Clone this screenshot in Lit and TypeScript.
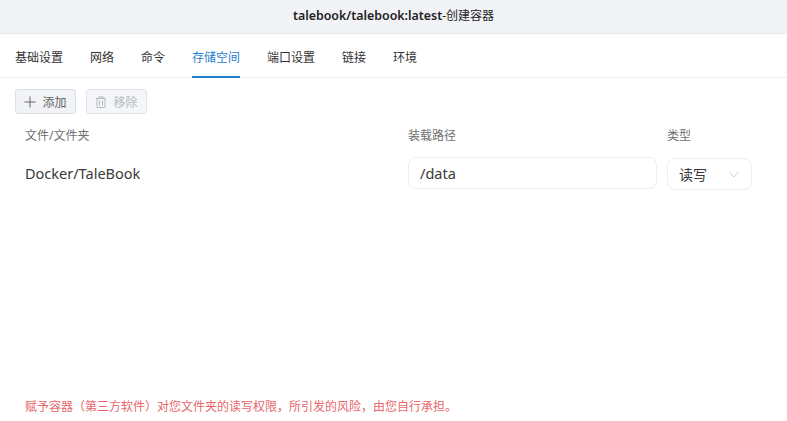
import { LitElement, html, css } from "lit";
import { customElement } from "lit/decorators.js";

@customElement("app-root")
export class AppRoot extends LitElement {
  static styles = css`
    :host {
      display: flex;
      flex-direction: column;
      width: 787px;
      height: 421px;
      background: #fff;
      overflow: hidden;
      font-family: "Noto Sans", "Noto Sans CJK SC", sans-serif;
      color: #333;
    }
    .title {
      height: 34px;
      box-sizing: border-box;
      flex: none;
      padding-bottom: 4px;
      background: #f1f3f7;
      border-bottom: 1px solid #e8e9ec;
      display: flex;
      align-items: center;
      justify-content: center;
      font-size: 12px;
      color: #222;
    }
    .title b { font-weight: 600; font-size: 12.4px; }
    .tabs {
      height: 44px;
      box-sizing: border-box;
      flex: none;
      display: flex;
      gap: 27px;
      padding-left: 15px;
      border-bottom: 1px solid #eeeff1;
      font-size: 12px;
    }
    .tab {
      display: flex;
      align-items: center;
      height: 44px;
      box-sizing: border-box;
      padding-top: 4px;
      border-bottom: 2px solid transparent;
    }
    .tab.on { color: #1f7ccb; border-bottom-color: #1f7ccb; }
    .tools { display: flex; gap: 10px; padding: 11px 0 0 15px; }
    .btn {
      width: 61px;
      height: 25px;
      box-sizing: border-box;
      border: 1px solid #dcdfe4;
      border-radius: 3px;
      background: #f1f3f6;
      display: flex;
      align-items: center;
      justify-content: center;
      gap: 6px;
      font-size: 12px;
      color: #666;
    }
    .btn.off { color: #b4b9c0; background: #f5f6f9; border-color: #e3e5ea; }
    .btn svg { display: block; }
    .grid {
      display: grid;
      grid-template-columns: 383px 259px 85px;
      padding-left: 25px;
      align-items: center;
    }
    .head { margin-top: 9px; height: 24px; font-size: 12px; color: #707070; }
    .row { margin-top: 10px; font-size: 14.5px; color: #3a3a3a; height: 33px; }
    .path { margin-bottom: 2px; }
    .input {
      width: 249px;
      height: 32px;
      margin-bottom: 1px;
      box-sizing: border-box;
      border: 1px solid #eceef1;
      border-radius: 8px;
      display: flex;
      align-items: center;
      padding-left: 11px;
    }
    .select {
      width: 85px;
      height: 32px;
      margin-top: 1px;
      box-sizing: border-box;
      border: 1px solid #eceef1;
      border-radius: 8px;
      display: flex;
      align-items: center;
      justify-content: space-between;
      padding: 0 12px 0 11px;
      font-size: 14px;
    }
    .spacer { flex: 1; }
    .warn {
      padding: 0 0 6px 25px;
      font-size: 12px;
      line-height: 16px;
      color: #e8666a;
    }
  `;

  render() {
    const tabs = ["基础设置", "网络", "命令", "存储空间", "端口设置", "链接", "环境"];
    return html`
      <div class="title"><span><b>talebook/talebook:latest</b>-创建容器</span></div>
      <div class="tabs">
        ${tabs.map((t) => html`<div class="tab ${t === "存储空间" ? "on" : ""}">${t}</div>`)}
      </div>
      <div class="tools">
        <div class="btn">
          <svg width="12" height="12" viewBox="0 0 12 12" fill="none" stroke="#666" stroke-width="1"><path d="M6 .5v11M.5 6h11"/></svg>
          <span>添加</span>
        </div>
        <div class="btn off">
          <svg width="12" height="12" viewBox="0 0 12 12" fill="none" stroke="#b4b9c0" stroke-width="1"><path d="M1 2.5h10M4 2.5V.8h4v1.7M2 2.5v9h8v-9M4.5 4.5v5M7.5 4.5v5"/></svg>
          <span>移除</span>
        </div>
      </div>
      <div class="grid head">
        <div>文件/文件夹</div>
        <div>装载路径</div>
        <div>类型</div>
      </div>
      <div class="grid row">
        <div class="path">Docker/TaleBook</div>
        <div class="input">/data</div>
        <div class="select">
          <span>读写</span>
          <svg width="10" height="7" viewBox="0 0 10 7" fill="none" stroke="#cdd0d5" stroke-width="1"><path d="M.5 1l4.5 5 4.5-5"/></svg>
        </div>
      </div>
      <div class="spacer"></div>
      <div class="warn">赋予容器（第三方软件）对您文件夹的读写权限，所引发的风险，由您自行承担。</div>
    `;
  }
}
